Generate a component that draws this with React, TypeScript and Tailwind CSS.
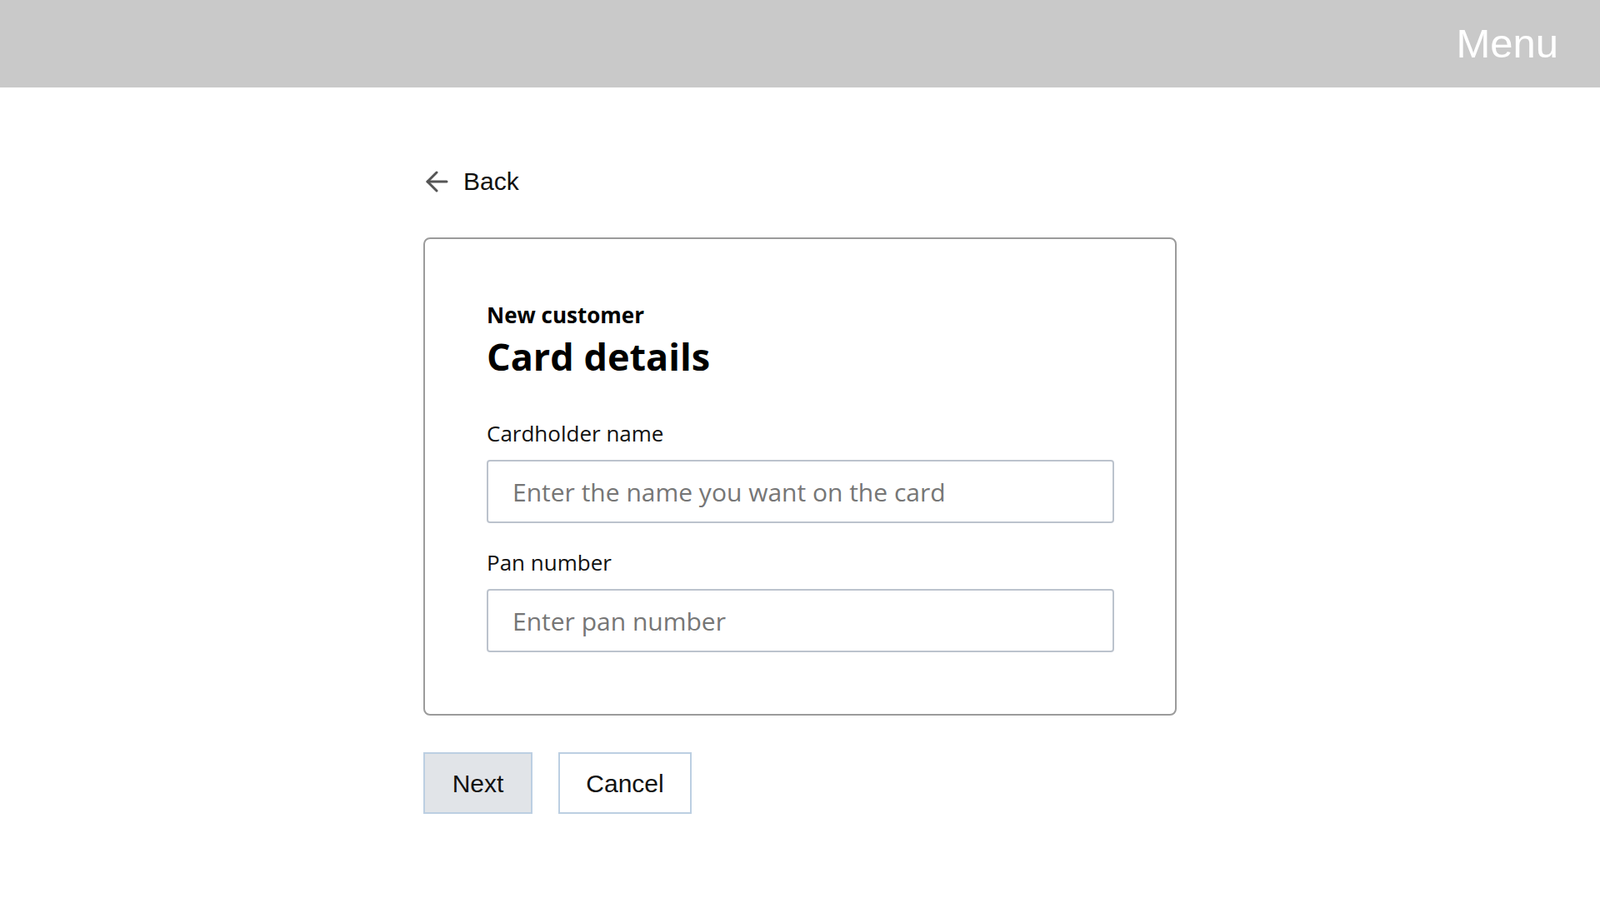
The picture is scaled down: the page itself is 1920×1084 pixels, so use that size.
import { JSX } from 'react';

const arial = { fontFamily: '"Liberation Sans", Arial, sans-serif' };
const openSans = { fontFamily: '"Open Sans", "Noto Sans", sans-serif' };

function BackArrow(): JSX.Element {
  return (
    <svg width="28" height="26" viewBox="0 0 28 26" fill="none" stroke="#555555" strokeWidth="3" strokeLinecap="round" strokeLinejoin="round">
      <path d="M26 13H3" />
      <path d="M14 2 3 13l11 11" />
    </svg>
  );
}

interface FieldProps {
  label: string;
  placeholder: string;
  className?: string;
}

function Field(props: Readonly<FieldProps>): JSX.Element {
  const { label, placeholder, className } = props;
  return (
    <div className={className}>
      <label className="block text-[26px] leading-none text-[#111]">{label}</label>
      <input
        type="text"
        placeholder={placeholder}
        className="mt-[19px] block h-[76px] w-[753px] rounded-[4px] border-2 border-[#bcc3cd] bg-white pl-[29px] text-[30px] text-[#111] outline-none placeholder:text-[#767676]"
        style={openSans}
      />
    </div>
  );
}

function App(): JSX.Element {
  return (
    <div className="min-h-screen bg-white">
      <header className="flex h-[105px] items-center justify-end bg-[#c9c9c9] pr-[50px]">
        <span className="text-[49px] leading-none text-white" style={arial}>
          Menu
        </span>
      </header>

      <main className="mx-auto w-[904px]">
        <a href="#" className="mt-[93px] flex h-[40px] items-center gap-[18px] pl-[2px] text-[30px] leading-none text-[#111]" style={arial}>
          <BackArrow />
          <span>Back</span>
        </a>

        <section className="mt-[47px] rounded-[8px] border-2 border-[#9b9b9b] pt-[78px] pr-[73px] pb-[74px] pl-[74px]" style={openSans}>
          <p className="text-[26px] font-bold leading-none text-black">New customer</p>
          <h1 className="mt-[14px] text-[45px] font-bold leading-none text-black">Card details</h1>
          <Field className="mt-[57px]" label="Cardholder name" placeholder="Enter the name you want on the card" />
          <Field className="mt-[34px]" label="Pan number" placeholder="Enter pan number" />
        </section>

        <div className="mt-[44px] flex gap-[31px]" style={arial}>
          <button type="button" className="h-[74px] w-[131px] border-2 border-[#bccfe2] bg-[#e1e4e8] text-[30px] text-[#111]">
            Next
          </button>
          <button type="button" className="h-[74px] w-[160px] border-2 border-[#bccfe2] bg-white text-[30px] text-[#111]">
            Cancel
          </button>
        </div>
      </main>
    </div>
  );
}

export default App;
